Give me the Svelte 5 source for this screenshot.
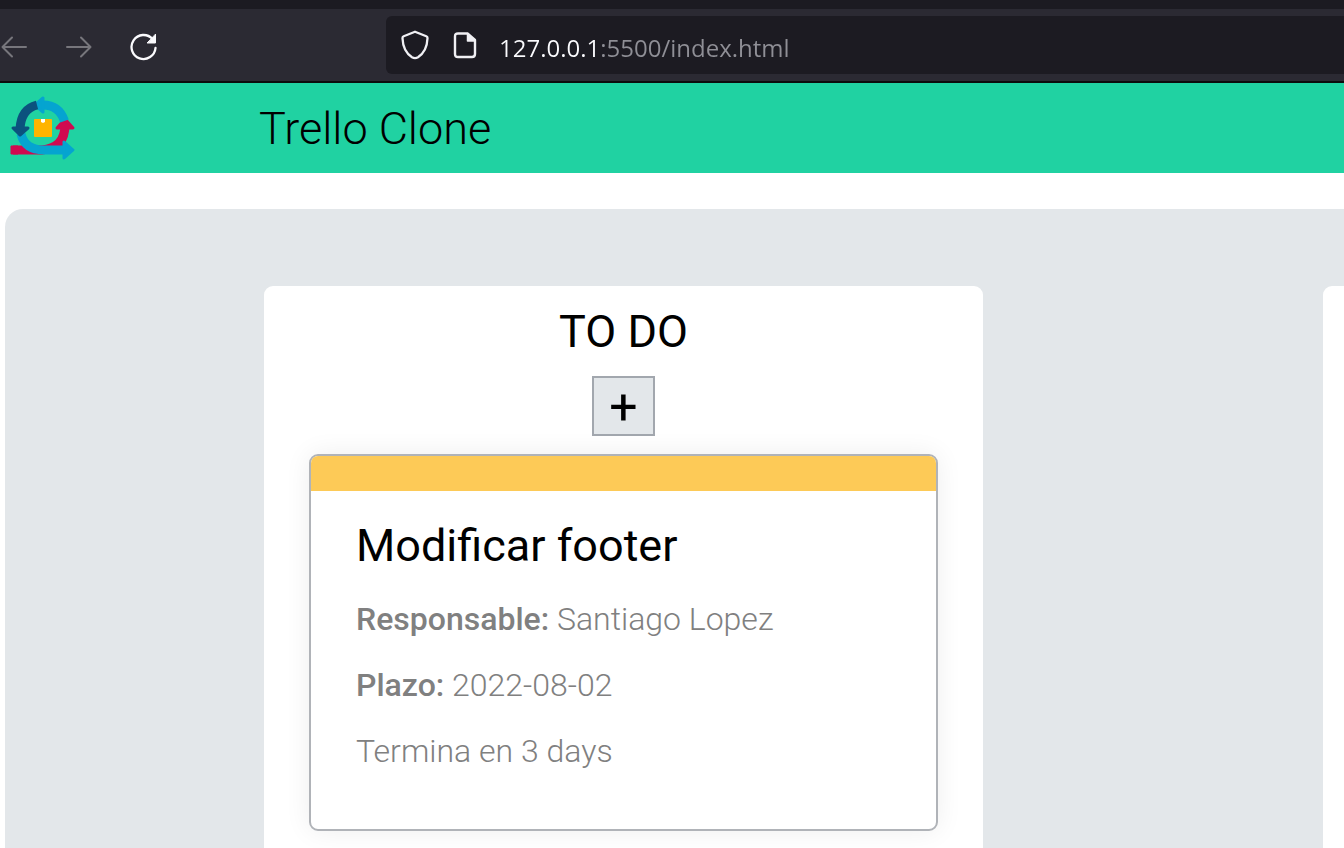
<script>
  const columns = [
    {
      title: 'TO DO',
      cards: [
        { title: 'Modificar footer', owner: 'Santiago Lopez', due: '2022-08-02', left: 'Termina en 3 days' }
      ]
    },
    { title: '', cards: [] }
  ];
  let address = '127.0.0.1:5500/index.html';
</script>

<div class="window">
  <div class="tabs"></div>
  <nav class="toolbar" aria-label="Browser">
    <div class="actions">
      <button type="button" aria-label="Back">
        <svg width="28" height="28" viewBox="0 0 28 28" fill="none" stroke="#77767c" stroke-width="2" stroke-linecap="round" stroke-linejoin="round"><path d="M26 14H3M12 4.500L2.500 14L12 23.500" /></svg>
      </button>
      <button type="button" aria-label="Forward">
        <svg width="28" height="28" viewBox="0 0 28 28" fill="none" stroke="#77767c" stroke-width="2" stroke-linecap="round" stroke-linejoin="round"><path d="M2 14H25M16 4.500L25.500 14L16 23.500" /></svg>
      </button>
      <button type="button" aria-label="Reload">
        <svg width="28" height="28" viewBox="0 0 28 28" fill="none" stroke="#fbfbfe" stroke-width="2.300" stroke-linecap="round"><path d="M25.500 15A12 12 0 1 1 22.500 6" /><path d="M25.500 1.500V10H17.500Z" fill="#fbfbfe" stroke="#fbfbfe" stroke-width="1" stroke-linejoin="round" /></svg>
      </button>
    </div>
    <label class="address">
      <svg width="28" height="30" viewBox="0 0 28 30" fill="none" stroke="#f0f0f4" stroke-width="2.300" stroke-linejoin="round"><path d="M14 1.700L25.300 6.300Q26.600 6.800 26.500 8.300Q26 21.500 17 27.200Q14 29 11 27.200Q2 21.500 1.500 8.300Q1.400 6.800 2.700 6.300Z" /></svg>
      <svg width="24" height="28" viewBox="0 0 24 28" fill="none" stroke="#f0f0f4" stroke-width="2.400" stroke-linejoin="round"><path d="M5 2.500H14.500L22 9V23Q22 26 19 26H5Q2 26 2 23V5.500Q2 2.500 5 2.500Z" /><path d="M14.500 2.500V10H22Z" fill="#f0f0f4" stroke-width="1.500" /></svg>
      <input type="text" aria-label="Address" spellcheck="false" bind:value={address} />
    </label>
  </nav>

  <header class="banner">
    <svg class="logo" width="66" height="64" viewBox="0 0 66 64" fill="none" aria-hidden="true">
      <path d="M3 54H32Q55 52 55 29" stroke="#d00a50" stroke-width="9" />
      <path d="M1 53V50H8V58H1Z" fill="#d00a50" stroke="#d00a50" stroke-linejoin="round" />
      <path d="M55 23L63 32H47Z" fill="#d00a50" stroke="#d00a50" stroke-width="3" stroke-linejoin="round" />
      <path d="M33 9Q49 9 54.500 25" stroke="#05a4d0" stroke-width="9" />
      <path d="M25 9L33 2V16Z" fill="#05a4d0" stroke="#05a4d0" stroke-width="3" stroke-linejoin="round" />
      <path d="M11 38Q15 54 34 54H56" stroke="#05a4d0" stroke-width="9" />
      <path d="M63 54L54 46V62Z" fill="#05a4d0" stroke="#05a4d0" stroke-width="3" stroke-linejoin="round" />
      <path d="M27 9Q11 13 10 33" stroke="#0b527e" stroke-width="9" />
      <path d="M3 32H18L10 39Z" fill="#0b527e" stroke="#0b527e" stroke-width="3" stroke-linejoin="round" />
      <rect x="24" y="23" width="18" height="18" rx="1" fill="#ffb400" />
      <path d="M31 23H35V26L33 27L31 26Z" fill="#fff" />
    </svg>
    <h1>Trello Clone</h1>
  </header>

  <main class="board">
    {#each columns as column}
      <section class="column">
        {#if column.title}
          <h2>{column.title}</h2>
          <button type="button" class="add" aria-label="Add card">+</button>
        {/if}
        {#each column.cards as card}
          <article class="card">
            <div class="stripe"></div>
            <div class="body">
              <h3>{card.title}</h3>
              <p><strong>Responsable:</strong> {card.owner}</p>
              <p><strong>Plazo:</strong> {card.due}</p>
              <p>{card.left}</p>
            </div>
          </article>
        {/each}
      </section>
    {/each}
  </main>
</div>

<style>
  :global(body) {
    margin: 0;
    background: #fff;
  }
  .window {
    display: flex;
    flex-direction: column;
    height: 100vh;
    overflow: hidden;
    font-family: Roboto, 'Open Sans', sans-serif;
    color: #000;
  }
  h1,
  h2,
  h3,
  p {
    margin: 0;
  }
  button {
    padding: 0;
    border: 0;
    background: none;
    font: inherit;
    color: inherit;
  }
  svg {
    display: block;
    flex: none;
  }
  .tabs {
    flex: none;
    height: 9px;
    background: #1c1b22;
  }
  .toolbar {
    flex: none;
    display: flex;
    align-items: center;
    padding: 7px 0;
    background: #2b2a33;
    border-bottom: 2px solid #0c0c0d;
  }
  .actions {
    flex: none;
    display: flex;
    gap: 37px;
    width: 386px;
    padding-top: 4px;
  }
  .address {
    flex: 1;
    display: flex;
    align-items: center;
    height: 58px;
    padding-left: 15px;
    box-sizing: border-box;
    background: #1c1b22;
    border-radius: 6px 0 0 6px;
  }
  .address svg + svg {
    margin: 0 22px 0 24px;
  }
  .address input {
    flex: 1;
    min-width: 0;
    height: 40px;
    padding: 4px 0 0;
    box-sizing: border-box;
    border: 0;
    outline: 0;
    font-family: 'Open Sans', 'Noto Sans', sans-serif;
    font-size: 24px;
    color: transparent;
    background: linear-gradient(to right, #fbfbfe 101px, #8f8f96 101px);
    background-clip: text;
    -webkit-background-clip: text;
  }
  .banner {
    flex: none;
    display: flex;
    align-items: center;
    height: 90px;
    padding-left: 10px;
    background: #20d2a2;
  }
  h1 {
    margin-left: calc(25vw - 153px);
    padding-top: 2px;
    font-size: 45px;
    font-weight: 300;
    line-height: 54px;
  }
  .board {
    flex: 1;
    display: flex;
    gap: calc(25vw + 4px);
    margin: 36px 0 0 5px;
    padding: 77px 0 0 calc(25vw - 77px);
    background: #e3e7ea;
    border-top-left-radius: 18px;
  }
  .column {
    flex: 0 0 calc(50vw + 47px);
    display: flex;
    flex-direction: column;
    align-items: center;
    box-sizing: border-box;
    padding: 19px 45px 0;
    background: #fff;
    border-radius: 9px 9px 0 0;
  }
  h2,
  h3 {
    font-size: 45px;
    font-weight: 400;
    line-height: 54px;
  }
  .add {
    width: 63px;
    height: 60px;
    margin: 17px 0 18px;
    box-sizing: border-box;
    padding-top: 2px;
    border: 2px solid #a2a7ae;
    background: #e3e7ea;
    font-size: 50px;
    line-height: 54px;
  }
  .card {
    align-self: stretch;
    overflow: hidden;
    border: 2px solid #b0b3b8;
    border-radius: 9px;
    box-shadow: 0 0 27px rgba(0, 0, 0, 0.07);
  }
  .stripe {
    height: 35px;
    background: #fdca57;
  }
  .body {
    padding: 28px 45px 58px;
  }
  p {
    margin-top: 26px;
    font-size: 32px;
    font-weight: 300;
    line-height: 40px;
    color: #808080;
  }
  strong {
    font-weight: 500;
  }
</style>
